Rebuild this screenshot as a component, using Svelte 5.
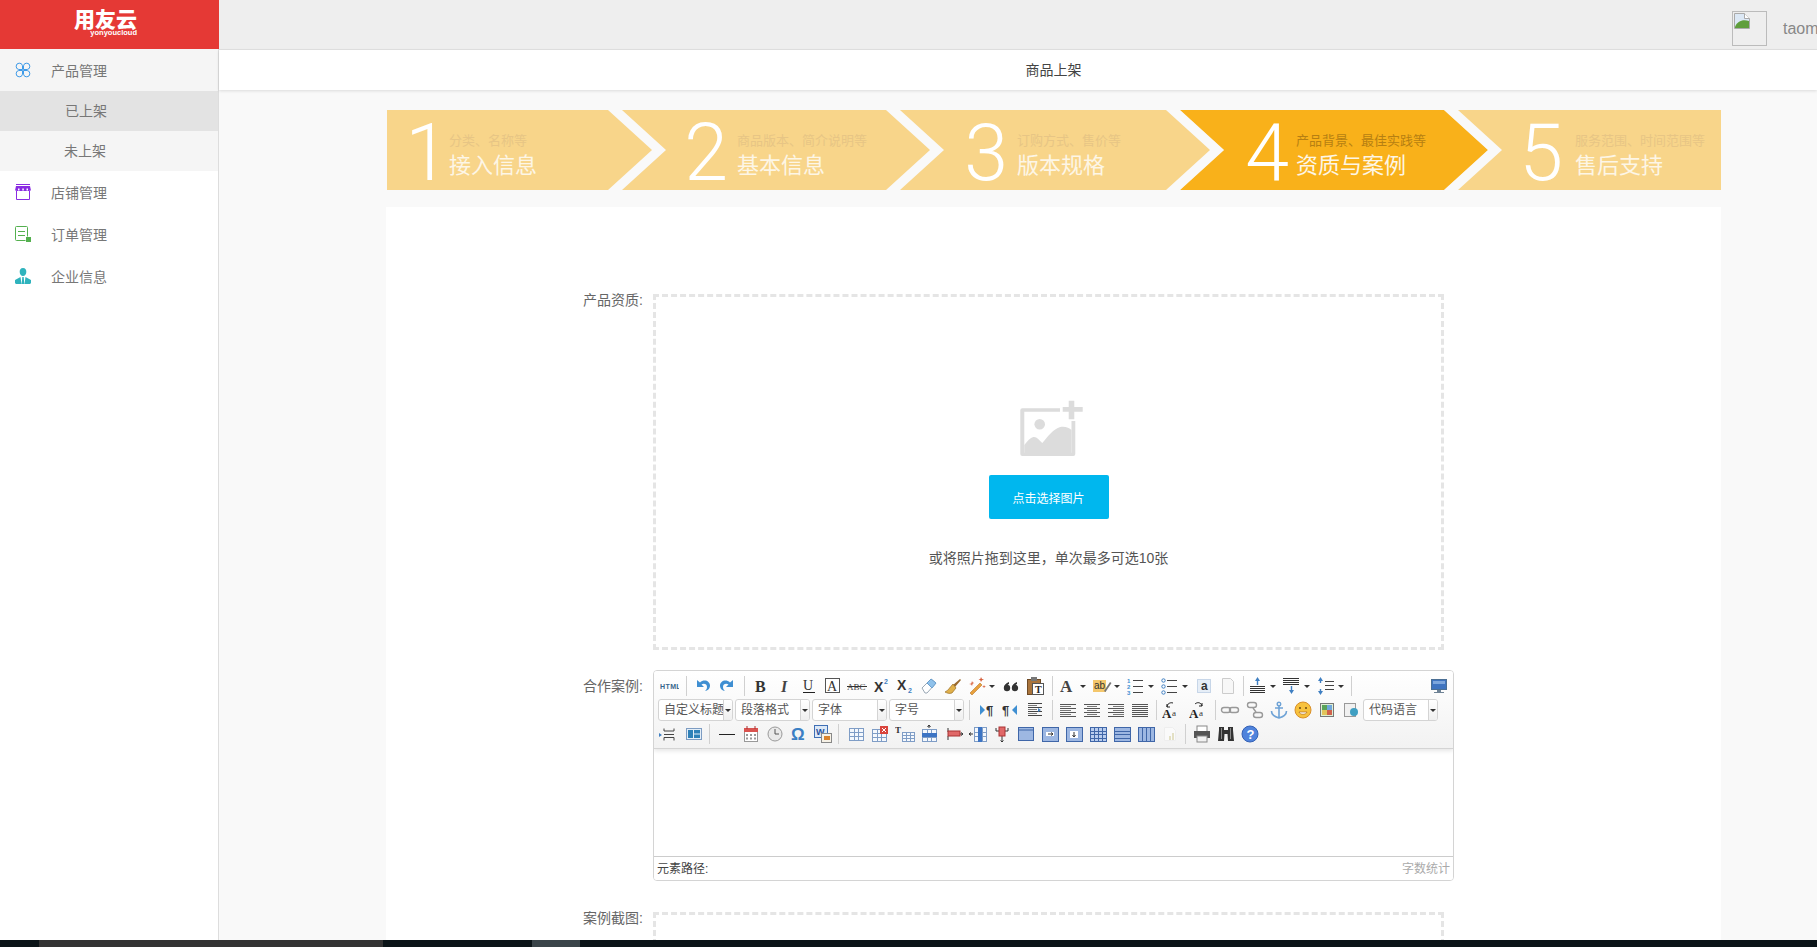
<script>
  const steps = [
    { n: 1, sub: '分类、名称等', title: '接入信息', w: 294, dw: 62, pr: 0 },
    { n: 2, sub: '商品版本、简介说明等', title: '基本信息', w: 279, dw: 56, pr: 9 },
    { n: 3, sub: '订购方式、售价等', title: '版本规格', w: 280, dw: 57, pr: 9 },
    { n: 4, sub: '产品背景、最佳实践等', title: '资质与案例', w: 278, dw: 56, pr: 7 },
    { n: 5, sub: '服务范围、时间范围等', title: '售后支持', w: 203, dw: 57, pr: 12 }
  ];
  steps[3].active = true;

  // chevron separators, x of the band's top-left corner inside the banner
  const bands = [221, 499, 779, 1057];

  const t = (s, x, y, size, fill, extra = '') =>
    `<text x="${x}" y="${y}" font-size="${size}" fill="${fill}" ${extra}>${s}</text>`;
  const serif = 'font-family="Liberation Serif"';
  const sans = 'font-family="Liberation Sans"';
  const hl = (ys, x1, x2, c = '#444') => ys.map((y) => `<path d="M${x1} ${y}.5H${x2}" stroke="${c}"/>`).join('');
  const grid = (x, y, w, h, cols, rows, c = '#7f9dc6', bg = '#f4f8fd') => {
    let s = `<rect x="${x}.5" y="${y}.5" width="${w}" height="${h}" fill="${bg}" stroke="${c}"/>`;
    for (let i = 1; i < cols; i++) s += `<path d="M${x + Math.round((w * i) / cols)}.5 ${y}v${h}" stroke="${c}"/>`;
    for (let i = 1; i < rows; i++) s += `<path d="M${x} ${y + Math.round((h * i) / rows)}.5h${w}" stroke="${c}"/>`;
    return s;
  };
  const blue = '#3f8fd2';

  const icons = {
    html: t('HTML', 1, 13, 7, '#35658c', `${sans} font-weight="700" letter-spacing=".4"`),
    undo: `<path d="M4 4v7h7L8.500 8.600c2.400-1.700 5.500-.4 5.500 2.400 0 1.600-.8 3-2 4 3.500-.5 5-3 5-5.500 0-4.500-6-7-10-3z" fill="${blue}"/>`,
    redo: `<path d="M16 4v7H9l2.500-2.400C9.100 6.900 6 8.200 6 11c0 1.600.8 3 2 4-3.500-.5-5-3-5-5.500 0-4.500 6-7 10-3z" fill="${blue}"/>`,
    bold: t('B', 4, 16, 16, '#333', `${serif} font-weight="700"`),
    italic: t('I', 6, 16, 16, '#444', `${serif} font-style="italic" font-weight="700"`),
    underline: t('U', 4, 14, 14, '#333', serif) + hl([16], 4, 16, '#222'),
    fontborder: '<rect x="2.500" y="2.500" width="14" height="14" fill="#fff" stroke="#555"/>' + t('A', 4, 15, 14, '#333', serif),
    strike: t('ABC', 0, 14, 9, '#444', serif) + hl([10], 0, 20, '#333'),
    sup: t('X', 3, 16, 14, '#333', `${sans} font-weight="700"`) + t('2', 13, 8, 7, '#3f7fc2', `${sans} font-weight="700"`),
    sub: t('X', 2, 14, 14, '#333', `${sans} font-weight="700"`) + t('2', 13, 17, 7, '#3f7fc2', `${sans} font-weight="700"`),
    eraser: '<path d="M3 12 12 3l5 4-9 10H6z" fill="#fff" stroke="#9aa8b5"/><path d="M12 3l5 4-4 5-5-5z" fill="#8fc1ea" stroke="#6a9fce"/>',
    brush: '<path d="M10 9 17 3l1 1-6 7z" fill="#9a6a2e"/><path d="M10 8l3 4-4 5c-3 1-5 0-7-1 3-1 5-5 8-8z" fill="#e0b04a" stroke="#9b6f22" stroke-width=".7"/>',
    wand: '<path d="M3 17 13 7l2 2L5 19z" fill="#e8a13c" stroke="#b8752a" stroke-width=".6"/><path d="M14 1l1 2 2 .5-2 .8L14 6l-.7-1.700-1.800-.8 1.800-.5zM5 5l.7 1.500 1.800.5-1.800.5L5 10l-.7-1.500L2 8l2.300-.5zM17 9l.6 1.200 1.400.4-1.400.4-.6 1.300-.5-1.300-1.500-.4 1.500-.4z" fill="#d65f3c"/>',
    quote: '<circle cx="6" cy="12" r="3.200" fill="#333"/><path d="M3 12c0-3 2-5 5-6v2c-1.500.5-2 1.500-2 3z" fill="#333"/><circle cx="14" cy="12" r="3.200" fill="#333"/><path d="M11 12c0-3 2-5 5-6v2c-1.500.5-2 1.500-2 3z" fill="#333"/>',
    paste: '<rect x="2.500" y="3.500" width="13" height="15" fill="#a9743c" stroke="#6e4a26"/><rect x="6" y="1" width="6" height="4" fill="#777"/><rect x="7.500" y="7.500" width="11" height="11" fill="#fff" stroke="#555"/>' + t('T', 10, 17, 10, '#222', `${serif} font-weight="700"`),
    forecolor: t('A', 2, 16, 17, '#444', `${serif} font-weight="700"`),
    backcolor: '<rect x="1" y="4" width="13" height="12" fill="#f4c76c"/>' + t('ab', 2, 13, 10, '#333', sans) + '<path d="M12 15l6-9 1.500 1-6 9z" fill="#777"/>',
    ol: t('1', 1, 7, 6, blue, `${sans} font-weight="700"`) + t('2', 1, 13, 6, blue, `${sans} font-weight="700"`) + t('3', 1, 19, 6, blue, `${sans} font-weight="700"`) + hl([4, 10, 16], 7, 17),
    ul: '<circle cx="3.500" cy="4.500" r="1.700" fill="#fff" stroke="#3f7fc2"/><circle cx="3.500" cy="10.500" r="1.700" fill="#fff" stroke="#3f7fc2"/><circle cx="3.500" cy="16.500" r="1.700" fill="#fff" stroke="#3f7fc2"/>' + hl([4, 10, 16], 7, 17),
    abox: '<rect x="3.500" y="3.500" width="13" height="13" fill="#e6eef7" stroke="#9db6d6" stroke-dasharray="1 1"/>' + t('a', 7, 14, 12, '#333', `${sans} font-weight="700"`),
    page: '<path d="M4.500 2.500h8l3 3v12h-11z" fill="#f7f7f7" stroke="#ccc"/>',
    rowtop: '<path d="M9.500 1 12 5h-1.800v4H8.800V5H7z" fill="#3f7fc2"/>' + hl([10, 12, 14, 16], 2, 17, '#333'),
    rowbottom: hl([2, 4, 6, 8], 1, 17, '#333') + '<path d="M9.500 18 12 14h-1.800v-4H8.800v4H7z" fill="#3f7fc2"/>',
    lineheight: '<path d="M4.500 1 7 5H5.200v2H3.800V5H2zM4.500 19 7 15H5.200v-2H3.800v2H2z" fill="#3f7fc2"/>' + hl([5, 9, 13], 9, 18, '#444'),
    preview: '<rect x="2.500" y="3.500" width="15" height="10" fill="#3f74c0" stroke="#4b6f94"/><path d="M4 5h12v3H4z" fill="#7da6dc"/><path d="M8 14h4v2H8zM5 16h10v1H5z" fill="#6e8295"/>',
    ltr: '<path d="M3 5l5 5-5 5z" fill="#3f8fd2"/>' + t('¶', 9, 15, 13, '#333', `${sans} font-weight="700"`),
    rtl: t('¶', 1, 15, 13, '#333', `${sans} font-weight="700"`) + '<path d="M16 5l-5 5 5 5z" fill="#3f8fd2"/>',
    indent: hl([3, 7, 11, 15], 3, 17, '#444') + hl([5, 9, 13], 3, 12, '#777') + '<path d="M13 8l3 2-3 2z" fill="#3f7fc2"/>',
    left: hl([4, 8, 12, 16], 2, 18, '#555') + hl([6, 10, 14], 2, 13, '#777'),
    center: hl([4, 8, 12, 16], 2, 18, '#555') + hl([6, 10, 14], 5, 15, '#777'),
    right: hl([4, 8, 12, 16], 2, 18, '#555') + hl([6, 10, 14], 7, 18, '#777'),
    justify: hl([4, 6, 8, 10, 12, 14, 16], 2, 18, '#555'),
    aaup: t('A', 0, 18, 13, '#222', `${serif} font-weight="700"`) + t('a', 10, 16, 9, '#333', serif) + '<path d="M5 7c0-3 3-5 6-4M5 4v3h3" fill="none" stroke="#222"/>',
    aadown: t('A', 0, 18, 13, '#222', `${serif} font-weight="700"`) + t('a', 10, 16, 9, '#333', serif) + '<path d="M6 4c2-2 6-2 7 2M13 3v3h-3" fill="none" stroke="#222"/>',
    link: '<rect x="1.500" y="7.500" width="9" height="5" rx="2.500" fill="none" stroke="#999" stroke-width="1.400"/><rect x="9.500" y="7.500" width="9" height="5" rx="2.500" fill="none" stroke="#999" stroke-width="1.400"/>',
    unlink: '<rect x="2.500" y="2.500" width="9" height="5" rx="2.500" fill="none" stroke="#999" stroke-width="1.400"/><rect x="8.500" y="12.500" width="9" height="5" rx="2.500" fill="none" stroke="#999" stroke-width="1.400"/><path d="M8 8l3 4" stroke="#999" stroke-width="1.400"/>',
    anchor: '<circle cx="10" cy="4" r="1.800" fill="none" stroke="#6fa3d6" stroke-width="1.400"/><path d="M10 6v12M6 8h8M2.500 11c0 4 4 6 7.500 7 3.500-1 7.500-3 7.500-7" fill="none" stroke="#6fa3d6" stroke-width="1.600"/>',
    emoji: '<circle cx="10" cy="10" r="8" fill="#f7c23e" stroke="#d98f2a"/><circle cx="7" cy="8" r="1" fill="#6a4a16"/><circle cx="13" cy="8" r="1" fill="#6a4a16"/><path d="M6 12c1 3 7 3 8 0z" fill="#fff" stroke="#b06a1a" stroke-width=".7"/>',
    image: '<rect x="3.500" y="3.500" width="13" height="13" fill="#dff0d5" stroke="#777"/><path d="M5 5h5v5H5z" fill="#5aa35a"/><path d="M10 5h5v5h-5z" fill="#6fa7dc"/><path d="M5 10h5v5H5z" fill="#e2c45a"/><path d="M10 10h5v5h-5z" fill="#d0614c"/>',
    map: '<rect x="3.500" y="3.500" width="11" height="13" fill="#f0f0f0" stroke="#999"/><circle cx="13" cy="12" r="4" fill="#3f9fc2"/>',
    insertpara: '<path d="M2 9l3 2-3 2z" fill="#3f7fc2"/>' + hl([10], 7, 17, '#444') + '<path d="M7 4.500v2.500h10V4.500M7 16.500v-3h10v3" fill="none" stroke="#444"/>',
    layout: '<rect x="2.500" y="4.500" width="15" height="11" fill="#e5eff8" stroke="#7d9cc2"/><rect x="4" y="6" width="5" height="8" fill="#2f81b8"/><rect x="10" y="6" width="6" height="3.500" fill="#2f81b8"/><rect x="10" y="10.500" width="6" height="3.500" fill="#2f81b8"/>',
    hr: hl([10], 2, 18, '#222'),
    date: '<rect x="3.500" y="4.500" width="13" height="13" fill="#fff" stroke="#999"/><rect x="3" y="4" width="14" height="4" fill="#d9534f"/><path d="M5 10h2v2H5zM9 10h2v2H9zM13 10h2v2h-2zM5 13.500h2v2H5zM9 13.500h2v2H9zM13 13.500h2v2h-2z" fill="#999"/><path d="M6 2v3M14 2v3" stroke="#a33"/>',
    time: '<circle cx="10" cy="10" r="7" fill="#e9e9e9" stroke="#999"/><path d="M10 5v5h4" fill="none" stroke="#555"/>',
    omega: t('Ω', 2, 16, 17, '#3b7fc4', `${sans} font-weight="700"`),
    word: '<rect x="1.500" y="1.500" width="13" height="12" fill="#dbe8f7" stroke="#3f6fb5"/>' + t('W', 3, 11, 9, '#1f4e9c', `${sans} font-weight="700"`) + '<rect x="8.500" y="9.500" width="10" height="9" fill="#f6f1e6" stroke="#888"/><rect x="11" y="12" width="6" height="4" fill="#d9822b"/>',
    table: grid(3, 4, 14, 12, 3, 3),
    deltable: grid(2, 5, 14, 12, 3, 3) + '<rect x="10" y="2" width="8" height="8" fill="#d9443c"/><path d="M12 4l4 4M16 4l-4 4" stroke="#fff"/>',
    titletable: t('T', 0, 9, 9, '#333', `${serif} font-weight="700"`) + grid(7, 8, 12, 9, 3, 3),
    insertrow: '<path d="M10 1v3M8.500 3 10 1l1.500 2" fill="none" stroke="#333"/>' + grid(3, 5, 14, 12, 3, 3) + '<rect x="3" y="9" width="15" height="4" fill="#3c74c4"/>',
    delrow: '<path d="M4 4v4M4 16v-4M16 10h3M17 8.500l2 1.500-2 1.500" fill="none" stroke="#333"/><rect x="4" y="7" width="12" height="5" fill="#e06868" stroke="#a33"/>',
    insertcol: '<path d="M1 10h4M3 8.500 1 10l2 1.500" fill="none" stroke="#333"/>' + grid(6, 3, 12, 14, 3, 3) + '<rect x="10" y="3" width="4" height="15" fill="#3c74c4"/>',
    delcol: '<path d="M10 12v6M8.500 16.500 10 18l1.500-1.500M4 4v3h12V4" fill="none" stroke="#333"/><rect x="7" y="3" width="6" height="9" fill="#e06868" stroke="#a33"/>',
    merge: '<rect x="2.500" y="3.500" width="15" height="13" fill="#9db7e2" stroke="#3f66a8"/><path d="M2 6h16" stroke="#3f66a8"/>',
    splitright: grid(2, 3, 16, 14, 1, 1, '#3f66a8', '#9db7e2') + '<path d="M6 8h8v4H6z" fill="#fff"/><path d="M8 10h5M11 8.500l2 1.500-2 1.500" fill="none" stroke="#333"/>',
    splitdown: grid(2, 3, 16, 14, 1, 1, '#3f66a8', '#9db7e2') + '<path d="M6 7h8v7H6z" fill="#fff"/><path d="M10 8v5M8.500 11 10 13l1.500-2" fill="none" stroke="#333"/>',
    cells: grid(2, 3, 16, 14, 4, 4, '#3f66a8', '#b9cdee'),
    rows: grid(2, 3, 16, 14, 1, 4, '#3f66a8', '#9db7e2'),
    cols: grid(2, 3, 16, 14, 4, 1, '#3f66a8', '#9db7e2'),
    chart: '<path d="M4.500 3.500h8l3 3v10h-11z" fill="#fafafa" stroke="#eee"/><path d="M9 16h2v-4H9zM12 16h2V9h-2z" fill="#e3e0c4"/>',
    print: '<rect x="5" y="2" width="10" height="6" fill="#fff" stroke="#888"/><rect x="2" y="7" width="16" height="7" fill="#555"/><rect x="5" y="12" width="10" height="6" fill="#f2f2f2" stroke="#888"/>',
    binoc: '<path d="M3 3h5v3h4V3h5v3l1 11h-6l-.5-7h-3L8 17H2L3 6z" fill="#333"/><path d="M5 4h1v11H5zM14 4h1v11h-1z" fill="#888"/>',
    help: '<circle cx="10" cy="10" r="8" fill="#4f83dc" stroke="#3461b5"/>' + t('?', 6.500, 15, 13, '#fff', `${sans} font-weight="700"`)
  };

  const rows = [
    'html s10 undo redo s10 bold italic underline fontborder strike sup sub eraser brush wand caret quote paste s9 forecolor caret backcolor caret ol caret ul caret abox page s6 rowtop caret rowbottom caret lineheight caret s6 fill preview'.split(' '),
    'g4 c自定义标题 g2 c段落格式 g2 c字体 g2 c字号 s10 g1 ltr rtl indent s9 left center right justify s8 aaup g3 aadown s7 link g1 unlink anchor emoji image map c代码语言'.split(' '),
    'g1 insertpara g3 layout s6 g3 hr date time omega word s6 g3 table deltable g1 titletable insertrow g1 delrow insertcol delcol merge splitright splitdown cells rows cols chart s6 g2 print binoc help'.split(' ')
  ];

  const tokenKind = (tok) => {
    if (tok === 'caret' || tok === 'fill') return tok;
    if (/^s\d+$/.test(tok)) return 'sep';
    if (/^g\d+$/.test(tok)) return 'gap';
    if (tok[0] === 'c' && !icons[tok]) return 'combo';
    return 'icon';
  };
</script>

<div class="app">
  <aside class="sidebar">
    <div class="logo">
      <span class="logo-cn">用友云</span>
      <span class="logo-en">yonyoucloud</span>
    </div>
    <nav>
      <div class="nav-group">
        <div class="nav-item">
          <svg class="nav-icon" width="16" height="16" viewBox="0 0 16 16" fill="none" stroke="#3f9be8" stroke-width="1">
            <path d="M7.500 7.500H3.800a3.200 3.200 0 1 1 3.700-3.700zM8.500 7.500h3.700a3.200 3.200 0 1 0-3.700-3.700zM7.500 8.500H3.800a3.200 3.200 0 1 0 3.700 3.700zM8.500 8.500h3.700a3.200 3.200 0 1 1-3.700 3.700z" />
          </svg>
          产品管理
        </div>
        <div class="nav-sub on">已上架</div>
        <div class="nav-sub off">未上架</div>
      </div>
      <div class="nav-item">
        <svg class="nav-icon" width="16" height="16" viewBox="0 0 16 16" fill="#8a2be2">
          <path d="M1 0h14v1H1zM1 2h14l1 4.500H0z" />
          <path d="M1.500 6.500h13v9h-13z" fill="#fff" stroke="#8a2be2" />
          <path d="M3 4.500h1.500v2H3zM7.300 4.500h1.500v2H7.300zM11.500 4.500H13v2h-1.500z" fill="#fff" />
        </svg>
        店铺管理
      </div>
      <div class="nav-item">
        <svg class="nav-icon" width="16" height="16" viewBox="0 0 16 16" fill="none" stroke="#54b04f">
          <path d="M10.500 14.500h-9a1 1 0 0 1-1-1v-12a1 1 0 0 1 1-1h10a1 1 0 0 1 1 1v9" />
          <path d="M3 5.500h7M3 9.500h7" />
          <rect x="11" y="11" width="5" height="5" fill="#54b04f" stroke="none" />
        </svg>
        订单管理
      </div>
      <div class="nav-item">
        <svg class="nav-icon" width="16" height="16" viewBox="0 0 16 16" fill="#2fb3bd">
          <path d="M8 0c2.400 0 3.500 2 3.300 4 0 2-1.300 4-3.300 4S4.700 6 4.700 4C4.500 2 5.600 0 8 0z" />
          <path d="M5.500 9 0 12c-.4 2 0 4 1 4h5.500zM10.500 9 16 12c.4 2 0 4-1 4H9.500zM7.300 9h1.400l.6 7H6.700z" />
        </svg>
        企业信息
      </div>
    </nav>
  </aside>

  <main class="main">
    <header class="topbar">
      <div class="avatar">
        <svg width="16" height="16" viewBox="0 0 16 16">
          <path d="M.5.5h10l5 5v10H.5z" fill="#dce8f5" stroke="#aaa" />
          <path d="M1 14c2-6 8-8 14-6v7H1z" fill="#5f9e3c" />
          <path d="M10.500.5v5h5" fill="#fff" stroke="#aaa" />
        </svg>
      </div>
      <span class="user">taom</span>
    </header>
    <div class="subbar">商品上架</div>

    <div class="content">
      <div class="banner">
        <svg class="banner-bg" width="1334" height="80" viewBox="0 0 1334 80">
          <rect width="1334" height="80" fill="#f8d58a" />
          <polygon points="793,0 1057,0 1101,40 1057,80 793,80 837,40" fill="#f9b11a" />
          {#each bands as x}
            <polygon points="{x},0 {x + 14},0 {x + 58},40 {x + 14},80 {x},80 {x + 44},40" fill="#f9f9f9" />
          {/each}
        </svg>
        {#each steps as s}
          <div class="step" class:active={s.active} style="width:{s.w}px">
            <span class="digit" style="width:{s.dw}px;padding-right:{s.pr}px">{s.n}</span>
            <div class="step-text">
              <span class="step-sub">{s.sub}</span>
              <span class="step-title">{s.title}</span>
            </div>
          </div>
        {/each}
      </div>

      <section class="card">
        <div class="row">
          <label class="field-label" for="up1">产品资质:</label>
          <div class="upload" id="up1">
            <svg class="pic" width="80" height="64" viewBox="0 0 80 64" fill="#dcdcdc">
              <path d="M10 12.300h38v3.400H12.300v41H59.500V25h3.800v33a2 2 0 0 1-2 2H10.300a2 2 0 0 1-2-2V14.300a2 2 0 0 1 2-2z" />
              <circle cx="27.700" cy="28.300" r="5.300" />
              <path d="M12.300 49c3-4 6-7.500 9-8 3.500-.5 6 3 9 6 5-6 11-14 18-16 5-1 9 1 11.200 3v23H12.300z" />
              <path d="M56.700 4.700h5.600V11h8.400v4.700h-8.400v7.600h-5.600v-7.600h-6V11h6z" />
            </svg>
            <button class="pick">点击选择图片</button>
            <p class="hint">或将照片拖到这里，单次最多可选10张</p>
          </div>
        </div>

        <div class="row">
          <span class="field-label editor-label">合作案例:</span>
          <div class="editor">
            <div class="toolbar">
              {#each rows as row}
                <div class="tb-row">
                  {#each row as tok}
                    {@const kind = tokenKind(tok)}
                    {#if kind === 'sep'}
                      <span class="tb-sep" style="width:{tok.slice(1)}px"></span>
                    {:else if kind === 'gap'}
                      <span style="width:{tok.slice(1)}px"></span>
                    {:else if kind === 'fill'}
                      <span class="tb-fill"></span>
                    {:else if kind === 'caret'}
                      <span class="tb-caret"></span>
                    {:else if kind === 'combo'}
                      <span class="combo"><span class="combo-text">{tok.slice(1)}</span><span class="combo-btn"></span></span>
                    {:else}
                      <span class="tb-btn"><svg width="20" height="20" viewBox="0 0 20 20">{@html icons[tok]}</svg></span>
                    {/if}
                  {/each}
                </div>
              {/each}
            </div>
            <div class="editor-body"></div>
            <div class="editor-foot">
              <span>元素路径:</span>
              <span class="count">字数统计</span>
            </div>
          </div>
        </div>

        <div class="row">
          <span class="field-label">案例截图:</span>
          <div class="upload"></div>
        </div>
      </section>
    </div>
  </main>

  <div class="taskbar">
    <span class="seg-a"></span>
    <span class="seg-b"></span>
  </div>
</div>

<style>
  :global(body) {
    margin: 0;
    font-family: "Liberation Sans", "Noto Sans CJK SC", sans-serif;
  }

  .app {
    display: flex;
    height: 100vh;
    overflow: hidden;
    position: relative;
    background: #f9f9f9;
  }

  .sidebar {
    width: 218px;
    flex: none;
    background: #fff;
    border-right: 1px solid #ddd;
  }
  .logo {
    height: 49px;
    margin-right: -1px;
    background: #e53935;
    color: #fff;
    display: flex;
    flex-direction: column;
    align-items: flex-end;
    padding: 7px 82px 0 0;
    box-sizing: border-box;
  }
  .logo-cn {
    font: 900 21px/22px "Noto Sans CJK SC", sans-serif;
  }
  .logo-en {
    font: 700 7.500px/8px "Liberation Sans", sans-serif;
  }
  .nav-group {
    background: #f5f5f5;
  }
  .nav-item {
    height: 42px;
    display: flex;
    align-items: center;
    padding-left: 15px;
    font-size: 14px;
    color: #777;
  }
  .nav-icon {
    margin-right: 20px;
    flex: none;
  }
  .nav-sub {
    height: 40px;
    line-height: 40px;
    font-size: 14px;
    color: #777;
  }
  .nav-sub.on {
    background: #e3e3e3;
    padding-left: 65px;
  }
  .nav-sub.off {
    padding-left: 64px;
  }

  .main {
    flex: 1;
    min-width: 0;
    display: flex;
    flex-direction: column;
  }
  .topbar {
    height: 50px;
    flex: none;
    box-sizing: border-box;
    background: #eee;
    border-bottom: 1px solid #e2e2e2;
    display: flex;
    align-items: flex-start;
    overflow: hidden;
    padding: 11px 0 0 1513px;
  }
  .avatar {
    width: 32px;
    height: 32px;
    flex: none;
    border: 1px solid #bbb;
    padding: 1px 0 0 1px;
    display: flex;
  }
  .avatar svg {
    flex: none;
  }
  .user {
    margin: 9px 0 0 16px;
    font-size: 16px;
    line-height: 18px;
    color: #888;
    white-space: nowrap;
  }
  .subbar {
    height: 40px;
    flex: none;
    line-height: 40px;
    background: #fff;
    text-align: center;
    font-size: 14px;
    color: #444;
    padding-left: 71px;
    box-shadow: 0 1px 3px rgba(0, 0, 0, 0.12);
  }

  .content {
    padding: 20px 96px 0 167px;
  }
  .banner {
    position: relative;
    height: 80px;
    margin-left: 1px;
    display: flex;
    overflow: hidden;
  }
  .banner-bg {
    position: absolute;
    left: 0;
    top: 0;
  }
  .step {
    position: relative;
    flex: none;
    display: flex;
    box-sizing: border-box;
  }
  .digit {
    flex: none;
    box-sizing: border-box;
    text-align: right;
    font: 300 79px/86px Roboto, sans-serif;
    color: #fff;
  }
  .step-text {
    display: flex;
    flex-direction: column;
    padding-top: 23px;
  }
  .step-sub {
    font-size: 13px;
    line-height: 16px;
    color: #e7c585;
    white-space: nowrap;
  }
  .step-title {
    font-size: 22px;
    line-height: 34px;
    color: #fdf6e6;
    white-space: nowrap;
  }
  .step.active .step-sub {
    color: #b67f12;
  }

  .card {
    margin-top: 17px;
    background: #fff;
    padding-top: 87px;
  }
  .row {
    display: flex;
    margin-bottom: 20px;
  }
  .row:nth-child(2) {
    margin-bottom: 31px;
  }
  .field-label {
    width: 257px;
    flex: none;
    text-align: right;
    font-size: 14px;
    line-height: 12px;
    color: #666;
    margin-right: 10px;
  }
  .editor-label {
    padding-top: 10px;
  }

  .upload {
    width: 791px;
    height: 356px;
    flex: none;
    box-sizing: border-box;
    border: 3px dashed #e5e5e5;
    display: flex;
    flex-direction: column;
    align-items: center;
  }
  .pic {
    margin-top: 99px;
    margin-left: 7px;
  }
  .pick {
    margin-top: 15px;
    width: 120px;
    height: 44px;
    border: 0;
    border-radius: 2px;
    background: #00b7ee;
    color: #fff;
    font: 12px "Liberation Sans", "Noto Sans CJK SC", sans-serif;
  }
  .hint {
    margin: 28px 0 0;
    font-size: 14px;
    line-height: 22px;
    color: #555;
  }

  .editor {
    width: 801px;
    height: 211px;
    flex: none;
    box-sizing: border-box;
    border: 1px solid #d4d4d4;
    border-radius: 4px;
    display: flex;
    flex-direction: column;
    overflow: hidden;
  }
  .toolbar {
    height: 78px;
    flex: none;
    box-sizing: border-box;
    padding: 3px 0 0 0;
    background: linear-gradient(#fff, #f2f2f2);
    border-bottom: 1px solid #d4d4d4;
    box-shadow: 0 2px 4px rgba(0, 0, 0, 0.1);
    position: relative;
  }
  .tb-row {
    display: flex;
    height: 24px;
    align-items: center;
    padding-left: 3px;
    padding-right: 2px;
  }
  .tb-row:nth-child(n + 2) {
    padding-left: 0;
  }
  .tb-btn {
    width: 24px;
    height: 24px;
    flex: none;
    display: flex;
    align-items: center;
    justify-content: center;
  }
  .tb-sep {
    flex: none;
    height: 20px;
    position: relative;
  }
  .tb-sep::after {
    content: "";
    position: absolute;
    left: 50%;
    top: 0;
    bottom: 0;
    border-left: 1px solid #d0d0d0;
  }
  .tb-fill {
    flex: 1;
  }
  .tb-caret {
    width: 10px;
    flex: none;
    position: relative;
    height: 3px;
  }
  .tb-caret::after {
    content: "";
    position: absolute;
    left: 0;
    top: 0;
    border: 3px solid transparent;
    border-top-color: #333;
  }
  .combo {
    width: 75px;
    height: 22px;
    flex: none;
    box-sizing: border-box;
    display: flex;
    background: #fff;
    border: 1px solid #d4d4d4;
    border-radius: 3px;
    overflow: hidden;
  }
  .combo-text {
    flex: 1;
    min-width: 0;
    overflow: hidden;
    white-space: nowrap;
    font-size: 12px;
    line-height: 21px;
    color: #555;
    padding-left: 5px;
  }
  .combo-btn {
    width: 8px;
    flex: none;
    border-left: 1px solid #d4d4d4;
    background: linear-gradient(#fff, #efefef);
    position: relative;
  }
  .combo-btn::after {
    content: "";
    position: absolute;
    left: 1px;
    top: 9px;
    border: 3px solid transparent;
    border-top-color: #333;
  }
  .editor-body {
    flex: 1;
    background: #fff;
  }
  .editor-foot {
    height: 24px;
    flex: none;
    box-sizing: border-box;
    border-top: 1px solid #ccc;
    display: flex;
    justify-content: space-between;
    padding: 0 3px;
    font-size: 12px;
    line-height: 25px;
    color: #444;
    background: #fff;
  }
  .count {
    color: #aaa;
  }

  .taskbar {
    position: absolute;
    left: 0;
    right: 0;
    bottom: 0;
    height: 7px;
    background: #0b1418;
  }
  .seg-a {
    position: absolute;
    left: 39px;
    width: 344px;
    height: 7px;
    background: #333;
  }
  .seg-b {
    position: absolute;
    left: 532px;
    width: 48px;
    height: 7px;
    background: #3a4449;
  }
</style>
